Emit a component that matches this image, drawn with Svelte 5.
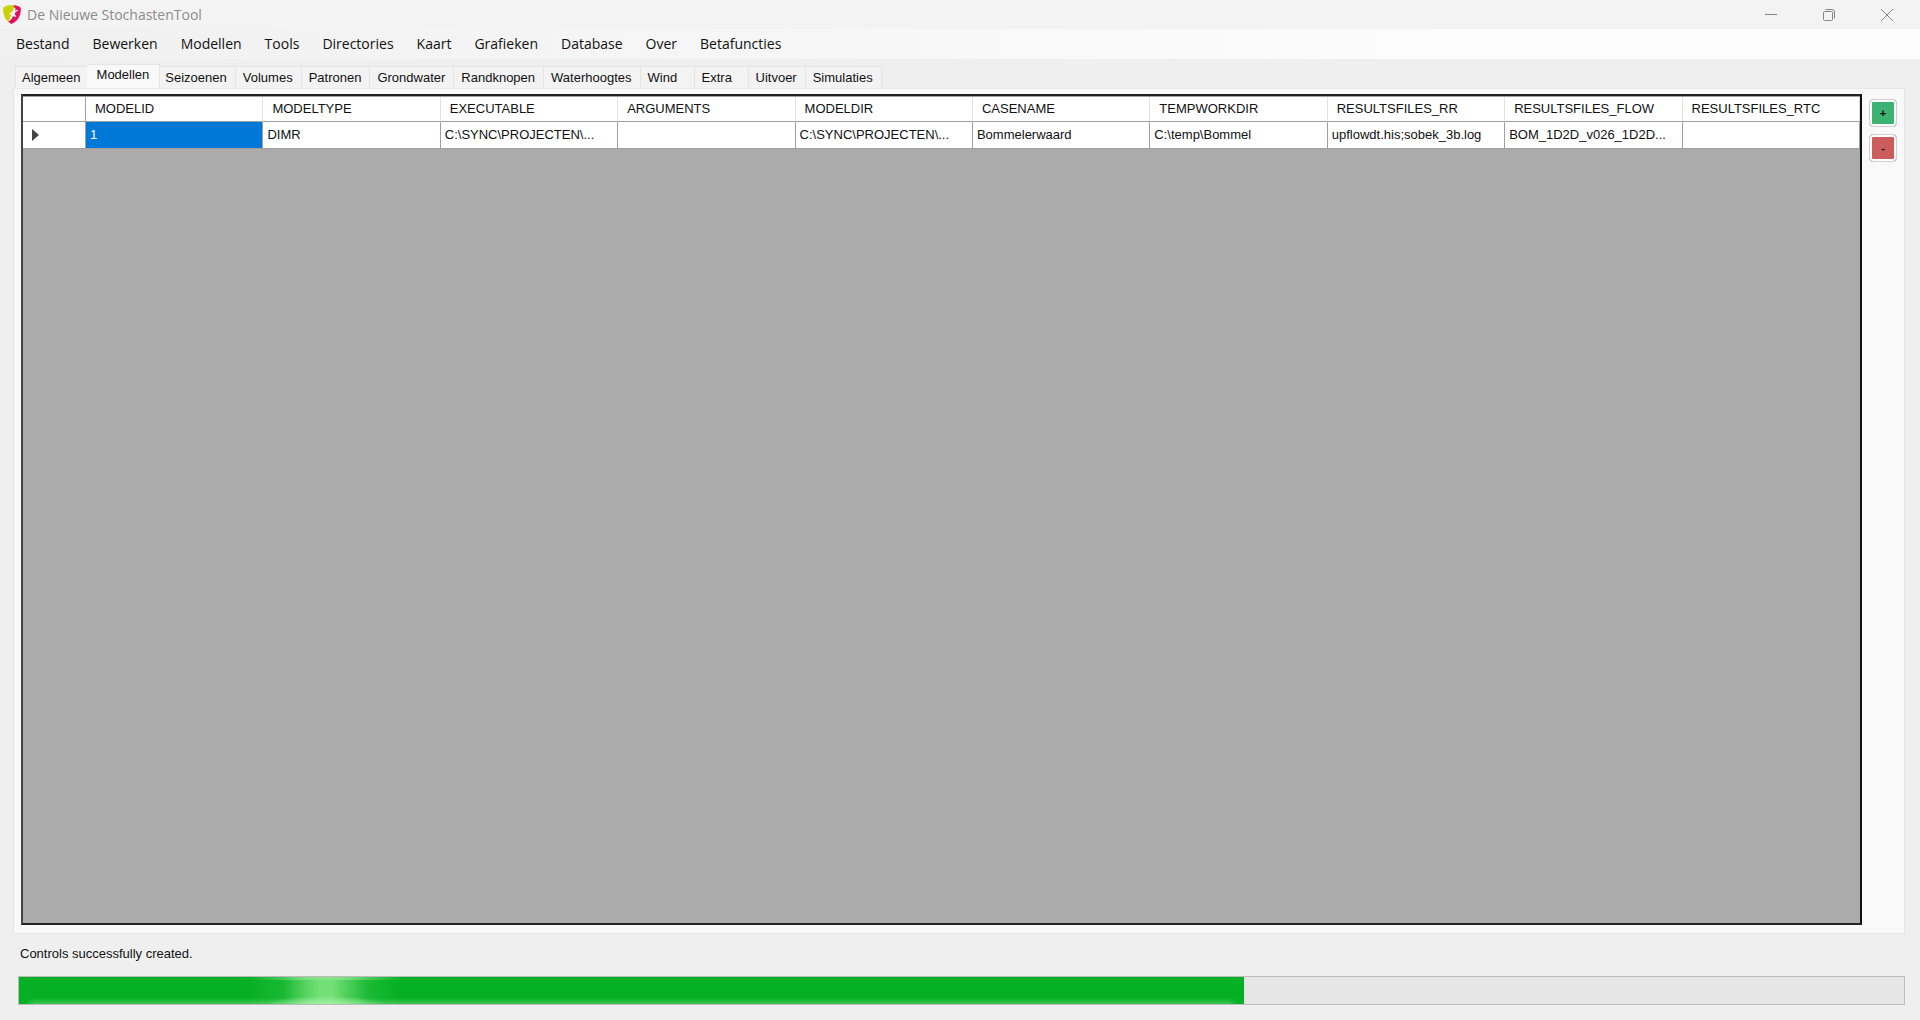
<script>
  const menus = ['Bestand', 'Bewerken', 'Modellen', 'Tools', 'Directories', 'Kaart', 'Grafieken', 'Database', 'Over', 'Betafuncties'];
  const tabs = ['Algemeen', 'Modellen', 'Seizoenen', 'Volumes', 'Patronen', 'Grondwater', 'Randknopen', 'Waterhoogtes', 'Wind', 'Extra', 'Uitvoer', 'Simulaties'];
  const columns = ['MODELID', 'MODELTYPE', 'EXECUTABLE', 'ARGUMENTS', 'MODELDIR', 'CASENAME', 'TEMPWORKDIR', 'RESULTSFILES_RR', 'RESULTSFILES_FLOW', 'RESULTSFILES_RTC'];
  const row = ['1', 'DIMR', 'C:\\SYNC\\PROJECTEN\\...', '', 'C:\\SYNC\\PROJECTEN\\...', 'Bommelerwaard', 'C:\\temp\\Bommel', 'upflowdt.his;sobek_3b.log', 'BOM_1D2D_v026_1D2D...', ''];
  let active = $state('Modellen');
  let selected = $state(0);
</script>

<div class="window">
  <header class="titlebar">
    <svg class="logo" viewBox="0 0 18 19" aria-hidden="true">
      <path d="M10 0C6 0 2.500 .8 .3 2.500C-.4 9 2 15.500 8.500 19L10.500 12L12 .2Z" fill="#c9d200" />
      <path d="M11 .2C13.500 .5 16 1.300 17.700 2.700C18.300 9 16 16 8.500 19C7.200 18.300 6.200 17.400 5.400 16.300L8.500 12L8.500 8.500L11.500 5Z" fill="#e0105f" />
      <path d="M11 2.500L12.600 3.200L12 5.600L14.400 4.400L14.900 5.400L12.300 7.600L11.700 9.500L13.300 11.300L12.500 12.200L10 11L9 13.500L6.300 16L5.400 15.200L7.600 12.300L8.200 9.500L6.200 9.200L6.500 8.200L9 7L10.200 5Z" fill="#fbeef0" />
    </svg>
    <h1>De Nieuwe StochastenTool</h1>
    <div class="caption-buttons">
      <button aria-label="Minimize"><svg viewBox="0 0 12 12"><path d="M0 5.500H12" /></svg></button>
      <button aria-label="Restore"><svg viewBox="0 0 12 12"><rect x=".5" y="2.500" width="9" height="9" rx="1" /><path d="M2.500 .5H9Q11.500 .5 11.500 3V9.500" /></svg></button>
      <button aria-label="Close"><svg viewBox="0 0 12 12"><path d="M0 0L12 12M12 0L0 12" /></svg></button>
    </div>
  </header>

  <nav class="menubar">
    {#each menus as menu}
      <button>{menu}</button>
    {/each}
  </nav>

  <main>
    <div class="tabs" role="tablist">
      {#each tabs as tab}
        <button role="tab" class:active={tab === active} aria-selected={tab === active} onclick={() => (active = tab)}>{tab}</button>
      {/each}
    </div>
    <section class="page">
      <div class="grid">
        <table>
          <thead>
            <tr>
              <th class="handle"></th>
              {#each columns as column}<th scope="col">{column}</th>{/each}
            </tr>
          </thead>
          <tbody>
            <tr>
              <th class="handle" scope="row">
                <svg viewBox="0 0 7 12" aria-label="Current row"><path d="M0 0L7 6L0 12Z" /></svg>
              </th>
              {#each row as cell, i}
                <td class:selected={i === selected} onclick={() => (selected = i)}>{cell}</td>
              {/each}
            </tr>
          </tbody>
        </table>
      </div>
      <div class="actions">
        <button class="add">+</button>
        <button class="remove">-</button>
      </div>
    </section>
  </main>

  <footer>
    <label for="progress">Controls successfully created.</label>
    <progress id="progress" value="65" max="100"></progress>
  </footer>
</div>

<style>
  :global(body) {
    margin: 0;
    background: #efefef;
  }
  .window {
    box-sizing: border-box;
    min-height: 100vh;
    display: flex;
    flex-direction: column;
    background: #efefef;
    color: #111;
    font: 13px/16px "Liberation Sans", Arial, sans-serif;
  }
  button {
    margin: 0;
    padding: 0;
    border: 0;
    background: none;
    color: inherit;
    font: inherit;
  }
  .titlebar {
    height: 29px;
    display: flex;
    align-items: center;
    padding-left: 3px;
    background: #f3f3f3;
  }
  .logo {
    width: 18px;
    height: 19px;
  }
  h1 {
    flex: 1;
    margin: 0 0 0 6px;
    color: #8c8c8c;
    font: 14px/20px "Open Sans", "Noto Sans", sans-serif;
  }
  .caption-buttons {
    display: flex;
    padding-right: 4px;
  }
  .caption-buttons button {
    width: 58px;
    height: 29px;
    display: grid;
    place-items: center;
  }
  .caption-buttons svg {
    width: 12px;
    height: 12px;
    fill: none;
    stroke: #858585;
  }
  .menubar {
    height: 30px;
    display: flex;
    align-items: center;
    gap: 23px;
    padding-left: 16px;
    background: linear-gradient(90deg, #f0f0f0, #fcfcfc 75%);
    font: 14px/20px "Open Sans", "Noto Sans", sans-serif;
  }
  main {
    flex: 1;
    display: flex;
    flex-direction: column;
    padding: 5px 15px 0 13px;
  }
  .tabs {
    display: flex;
    align-items: flex-end;
    height: 24px;
    padding-left: 2px;
  }
  .tabs button {
    box-sizing: border-box;
    min-width: 54px;
    height: 22px;
    padding: 0 8px 0 7px;
    border: 1px solid #e5e5e5;
    border-left-width: 0;
    border-bottom: 0;
    background: #f3f3f3;
    text-align: left;
  }
  .tabs button:first-child {
    padding: 0 7px 0 6px;
    border-left-width: 1px;
  }
  .tabs .active {
    z-index: 1;
    height: 24px;
    margin: 0 -2px;
    padding: 0 10px 4px;
    background: #f9f9f9;
  }
  .page {
    flex: 1;
    display: flex;
    gap: 7px;
    padding: 5px 7px 8px;
    border: 1px solid #e5e5e5;
    border-top-color: #e9e9e9;
    background: #f9f9f9;
  }
  .grid {
    flex: 1;
    border: 2px solid #222;
    border-right-color: #111;
    border-left-color: #444;
    background: #ababab;
  }
  table {
    width: 100%;
    table-layout: fixed;
    border-collapse: separate;
    border-spacing: 0;
    border-top: 1px solid #a0a0a0;
    background: #fff;
  }
  th,
  td {
    box-sizing: border-box;
    overflow: hidden;
    border-right: 1px solid #a0a0a0;
    border-bottom: 1px solid #a0a0a0;
    text-align: left;
    font-weight: 400;
    white-space: nowrap;
  }
  th {
    height: 25px;
    padding: 0 0 0 9px;
  }
  thead th {
    border-right-color: #e2e2e2;
  }
  td {
    height: 27px;
    padding: 0 0 0 4px;
  }
  .handle,
  thead .handle {
    width: 63px;
    border-right-color: #a0a0a0;
  }
  .handle svg {
    display: block;
    width: 7px;
    height: 12px;
    fill: #444;
  }
  .selected {
    background: #0078d7;
    color: #fff;
  }
  .actions {
    display: flex;
    flex-direction: column;
    gap: 7px;
    padding-top: 5px;
  }
  .actions button {
    width: 28px;
    height: 28px;
    padding: 2px;
    border: 1px solid #d0d0d0;
    border-radius: 4px;
    box-shadow: inset 0 0 0 2px #fdfdfd;
    font-size: 11px;
    font-weight: 700;
  }
  .actions .add {
    background: #3cb371;
  }
  .actions .remove {
    background: #cd5c5c;
  }
  footer {
    display: flex;
    flex-direction: column;
    gap: 14px;
    padding: 12px 15px 15px 18px;
  }
  label {
    padding-left: 2px;
  }
  progress {
    box-sizing: border-box;
    width: 100%;
    height: 29px;
    border: 1px solid #bcbcbc;
    appearance: none;
    background: #e6e6e6;
  }
  progress::-webkit-progress-bar {
    background: #e6e6e6;
  }
  progress::-webkit-progress-value {
    background:
      linear-gradient(90deg, #8fe89200 230px, #8fe892a0 290px 325px, #8fe89200 385px) 0 0 / 100% 3px no-repeat,
      radial-gradient(60px 8px at 306px 100%, #a4f0a6, #a4f0a600) no-repeat,
      linear-gradient(90deg, #72e07600 230px, #72e07630 265px, #72e076c0 287px, #72e076 300px 314px, #72e076c0 324px, #72e07630 350px, #72e07600 380px),
      linear-gradient(90deg, #06b025 6px, #06b02500 16px calc(100% - 16px), #06b025 calc(100% - 6px)),
      linear-gradient(#06b025 21px, #3fc456 27px);
  }
</style>
